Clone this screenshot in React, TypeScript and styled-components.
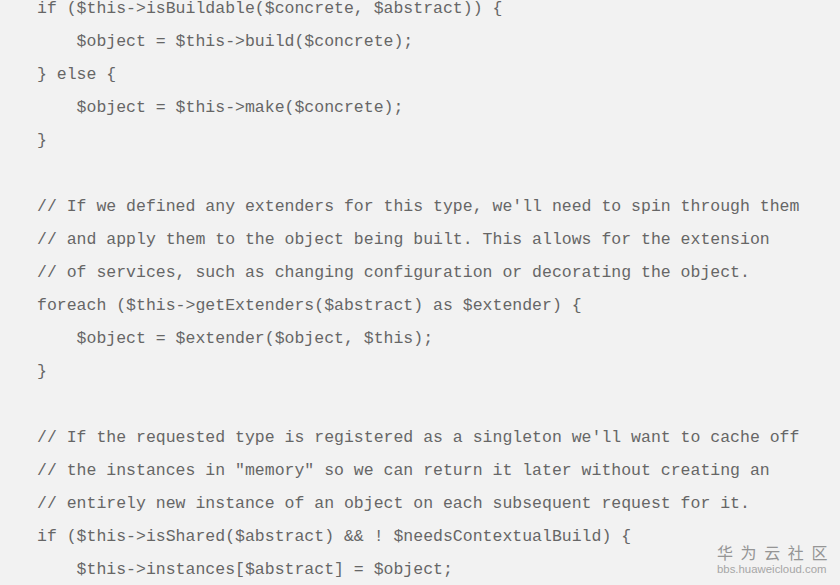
import React from "react";
import styled, { createGlobalStyle } from "styled-components";

const Global = createGlobalStyle`
  html, body { margin: 0; padding: 0; background: #f2f2f2; overflow: hidden; }
  #root { width: 840px; height: 585px; }
`;

const Page = styled.div`
  position: relative;
  width: 840px;
  height: 585px;
  overflow: hidden;
  background: #f2f2f2;
`;

const Code = styled.pre`
  margin: -8px 0 0 0;
  padding: 0 0 0 37px;
  font-family: "Liberation Mono", "DejaVu Sans Mono", monospace;
  font-size: 16.5px;
  line-height: 33px;
  color: #666666;
  white-space: pre;
`;

const Line = styled.div`
  height: 33px;
`;

const Watermark = styled.div`
  position: absolute;
  left: 717px;
  top: 542px;
  display: flex;
  flex-direction: column;
  align-items: flex-start;
`;

const MarkTitle = styled.div`
  font-family: "Noto Sans CJK SC", sans-serif;
  font-size: 16px;
  line-height: 21px;
  letter-spacing: 7.6px;
  color: #959595;
`;

const MarkUrl = styled.div`
  font-family: "Liberation Sans", Arial, sans-serif;
  font-size: 11.4px;
  line-height: 13px;
  letter-spacing: 0;
  color: #a6a6a6;
`;

const lines = [
  "if ($this->isBuildable($concrete, $abstract)) {",
  "    $object = $this->build($concrete);",
  "} else {",
  "    $object = $this->make($concrete);",
  "}",
  "",
  "// If we defined any extenders for this type, we'll need to spin through them",
  "// and apply them to the object being built. This allows for the extension",
  "// of services, such as changing configuration or decorating the object.",
  "foreach ($this->getExtenders($abstract) as $extender) {",
  "    $object = $extender($object, $this);",
  "}",
  "",
  "// If the requested type is registered as a singleton we'll want to cache off",
  "// the instances in \"memory\" so we can return it later without creating an",
  "// entirely new instance of an object on each subsequent request for it.",
  "if ($this->isShared($abstract) && ! $needsContextualBuild) {",
  "    $this->instances[$abstract] = $object;",
];

export default function App() {
  return (
    <Page>
      <Global />
      <Code>
        {lines.map((l, i) => (
          <Line key={i}>{l}</Line>
        ))}
      </Code>
      <Watermark>
        <MarkTitle>华为云社区</MarkTitle>
        <MarkUrl>bbs.huaweicloud.com</MarkUrl>
      </Watermark>
    </Page>
  );
}
